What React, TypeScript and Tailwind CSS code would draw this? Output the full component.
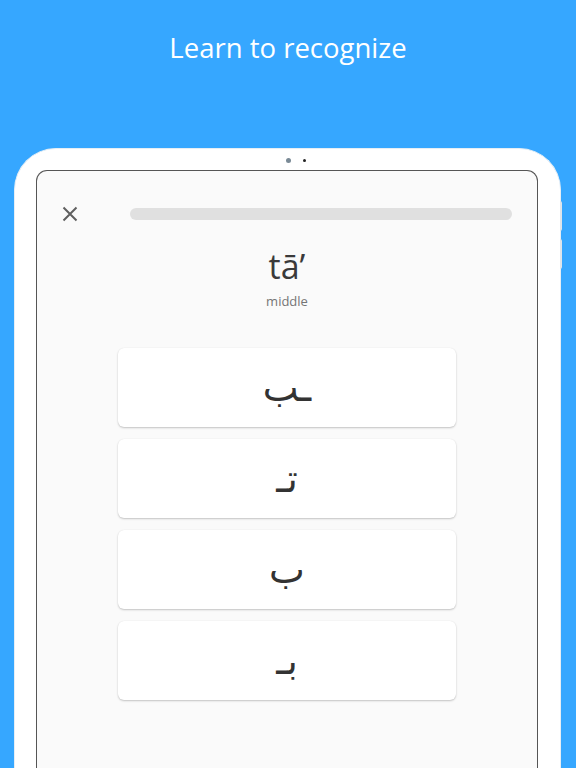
import React from "react";

const options = ["ـب", "تـ", "ب", "بـ"];

export default function App() {
  return (
    <div className="w-[576px] h-[768px] bg-[#36a7ff] overflow-hidden flex flex-col" style={{ fontFamily: '"Open Sans", "Noto Sans", sans-serif' }}>
      <div className="h-[148px] flex justify-center pt-[29px]">
        <h1 className="text-white text-[27.5px] leading-[38px] font-normal">Learn to recognize</h1>
      </div>
      <div className="relative ml-[14px] w-[547px] flex-1 bg-white rounded-t-[42px] border-t border-x border-[#e6eef5] pt-[21px] pl-[21px] pr-[22px] flex flex-col">
        <div className="absolute top-[9px] left-[271px] w-[5px] h-[5px] rounded-full bg-[#7a8a96]" />
        <div className="absolute top-[10px] left-[288px] w-[3px] h-[3px] rounded-full bg-[#222]" />
        <div className="absolute right-[-2px] top-[52px] w-[2px] h-[30px] bg-[#dfe5ea] rounded-r" />
        <div className="absolute right-[-2px] top-[90px] w-[2px] h-[30px] bg-[#dfe5ea] rounded-r" />
        <div className="flex-1 bg-[#fafafa] border-t border-x border-[#555] rounded-t-[11px] flex flex-col">
          <div className="flex items-center h-[12px] mt-[37px] pl-[25px] pr-[25px]">
            <svg width="16" height="16" viewBox="0 0 16 16" className="shrink-0">
              <path d="M1.5 1.5 L14.5 14.5 M14.5 1.5 L1.5 14.5" stroke="#5f5f5f" strokeWidth="2" strokeLinecap="butt" />
            </svg>
            <div className="ml-[52px] flex-1 h-[12px] rounded-full bg-[#e0e0e0]" />
          </div>
          <div className="flex flex-col items-center mt-[26px]">
            <div className="text-[34px] leading-[40px] text-[#3a3a3a]">tā’</div>
            <div className="text-[13px] leading-[18px] text-[#757575] mt-[6px]">middle</div>
          </div>
          <div className="flex flex-col items-center gap-[12px] mt-[38px]">
            {options.map((o, i) => (
              <div
                key={i}
                className="w-[338px] h-[79px] bg-white rounded-[6px] shadow-[0_1px_2px_rgba(0,0,0,0.22),0_0_1px_rgba(0,0,0,0.08)] flex items-center justify-center"
              >
                <span dir="rtl" className="text-[38px] leading-none text-[#333]" style={{ fontFamily: '"DejaVu Sans", sans-serif' }}>
                  {o}
                </span>
              </div>
            ))}
          </div>
        </div>
      </div>
    </div>
  );
}
